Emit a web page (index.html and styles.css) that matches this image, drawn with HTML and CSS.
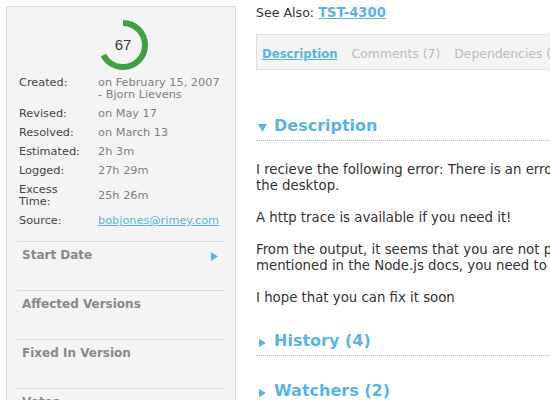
FILE: index.html
```html
<!DOCTYPE html>
<html>
<head>
<meta charset="utf-8">
<link rel="stylesheet" href="styles.css">
</head>
<body>
<div class="page">
  <aside class="sidebar">
    <div class="ring">
      <svg width="50" height="50" viewBox="0 0 50 50">
        <circle cx="25" cy="25" r="22" fill="none" stroke="#3fa142" stroke-width="6" stroke-dasharray="92.6 200" transform="rotate(-90 25 25)"/>
      </svg>
      <span class="ring-value">67</span>
    </div>
    <dl class="details">
      <dt>Created:</dt><dd>on February 15, 2007<br>- Bjorn Lievens</dd>
      <dt>Revised:</dt><dd>on May 17</dd>
      <dt>Resolved:</dt><dd>on March 13</dd>
      <dt>Estimated:</dt><dd>2h 3m</dd>
      <dt>Logged:</dt><dd>27h 29m</dd>
      <dt>Excess<br>Time:</dt><dd>25h 26m</dd>
      <dt>Source:</dt><dd><a href="#" class="mail">bobjones@rimey.com</a></dd>
    </dl>
    <div class="panel">
      <h3 class="panel-title">Start Date</h3>
      <svg class="panel-arrow" width="7" height="9" viewBox="0 0 7 9"><polygon points="0,0 7,4.5 0,9" fill="#5ab4e0"/></svg>
    </div>
    <div class="panel"><h3 class="panel-title">Affected Versions</h3></div>
    <div class="panel"><h3 class="panel-title">Fixed In Version</h3></div>
    <div class="panel"><h3 class="panel-title">Votes</h3></div>
  </aside>
  <main class="main">
    <p class="see-also">See Also: <a href="#" class="link-bold">TST-4300</a></p>
    <nav class="tabs">
      <a href="#" class="tab active">Description</a>
      <a href="#" class="tab">Comments (7)</a>
      <a href="#" class="tab">Dependencies (3)</a>
    </nav>
    <section class="section">
      <h2 class="section-title"><svg class="tri" width="9" height="9" viewBox="0 0 9 9"><polygon points="0,1 9,1 4.5,9" fill="#5ab4e0"/></svg>Description</h2>
      <div class="section-body">
        <p>I recieve the following error: There is an error in the application when launching it from<br>the desktop.</p>
        <p>A http trace is available if you need it!</p>
        <p>From the output, it seems that you are not passing the right options. As<br>mentioned in the Node.js docs, you need to set the encoding first.</p>
        <p>I hope that you can fix it soon</p>
      </div>
    </section>
    <section class="section">
      <h2 class="section-title"><svg class="tri" width="9" height="9" viewBox="0 0 9 9"><polygon points="1,1 8,5 1,9" fill="#5ab4e0"/></svg>History (4)</h2>
    </section>
    <section class="section">
      <h2 class="section-title plain"><svg class="tri" width="9" height="9" viewBox="0 0 9 9"><polygon points="1,1 8,5 1,9" fill="#5ab4e0"/></svg>Watchers (2)</h2>
    </section>
  </main>
</div>
</body>
</html>
```
FILE: styles.css
```css
* { box-sizing: border-box; }
html, body { margin: 0; padding: 0; background: #fff; overflow: hidden; }
body { font-family: "DejaVu Sans", Verdana, sans-serif; color: #333; }
.page {
  width: 550px;
  height: 400px;
  overflow: hidden;
  display: flex;
  align-items: flex-start;
  padding: 6px 0 0 6px;
}
.sidebar {
  flex: none;
  width: 230px;
  height: 460px;
  background: #f4f4f4;
  border: 1px solid #ddd;
  padding: 13px 10px 0;
}
.ring {
  position: relative;
  width: 50px;
  height: 50px;
  margin: 0 auto;
  left: 2px;
}
.ring svg { display: block; }
.ring-value {
  position: absolute;
  left: 0; right: 0; top: 17px;
  text-align: center;
  font-family: "Liberation Sans", Arial, sans-serif;
  font-size: 15px;
  line-height: 16px;
  color: #333;
}
.details {
  display: grid;
  grid-template-columns: 79px 1fr;
  row-gap: 7px;
  margin: 7px 0 14px 2px;
  font-size: 11.3px;
  line-height: 12px;
}
.details dt { color: #444; align-self: start; }
.details dd { margin: 0; color: #808080; align-self: center; }
.mail { color: #5ab4e0; text-decoration: underline; }
.panel {
  height: 49px;
  border-top: 1px solid #ddd;
  padding: 6px 7px 0 5px;
  display: flex;
  justify-content: space-between;
  align-items: flex-start;
}
.panel-title {
  margin: 0;
  font-size: 12px;
  line-height: 14px;
  font-weight: bold;
  color: #888;
}
.panel-arrow { margin-top: 4px; }
.main {
  flex: none;
  width: 620px;
  margin-left: 20px;
  font-size: 13.3px;
}
.see-also {
  margin: 0;
  font-size: 12.6px;
  line-height: 14px;
  color: #333;
}
.link-bold { color: #5ab4e0; font-weight: bold; text-decoration: underline; font-size: 13.2px; }
.tabs {
  margin-top: 14px;
  margin-bottom: 46px;
  display: flex;
  align-items: baseline;
  gap: 14px;
  white-space: nowrap;
  background: #f4f4f4;
  border: 1px solid #ddd;
  padding: 11px 5px 7px;
  line-height: 16px;
  font-size: 12.4px;
}
.tab { color: #bbb; text-decoration: none; }
.tab.active { color: #5ab4e0; font-weight: bold; text-decoration: underline; font-size: 11.7px; }
.section { margin-top: 25px; }
.section-title {
  margin: 0;
  display: flex;
  align-items: center;
  font-size: 16px;
  line-height: 20px;
  font-weight: bold;
  color: #5ab4e0;
  padding: 0 0 4px 2px;
  border-bottom: 1px dotted #bbb;
}
.section-title.plain { border-bottom-color: transparent; }
.tri { margin-right: 7px; margin-top: 2px; flex: none; }
.section-body { margin-top: 21px; }
.section-body p {
  margin: 0 0 16px;
  line-height: 16px;
  color: #333;
  white-space: nowrap;
}
```
